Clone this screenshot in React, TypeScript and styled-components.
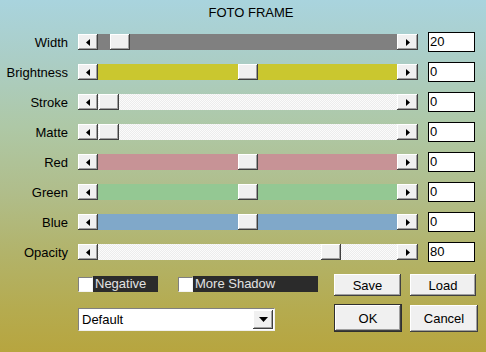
import React from "react";
import styled, { createGlobalStyle, css } from "styled-components";

const Global = createGlobalStyle`
  html, body { margin: 0; padding: 0; }
  body { font-family: "Liberation Sans", Arial, sans-serif; }
`;

const raised = css`
  background: #f0f0f0;
  box-shadow: inset -1px -1px #404040, inset 1px 1px #ffffff, inset -2px -2px #a0a0a0;
`;

const Dialog = styled.div`
  width: 486px;
  height: 352px;
  box-sizing: border-box;
  display: flex;
  flex-direction: column;
  background: linear-gradient(
    to bottom,
    #a9d4de 0%,
    #abcdc4 18%,
    #aec8a6 36%,
    #b0bd8a 55%,
    #b2b36a 72%,
    #b5ab4f 88%,
    #b7a53f 100%
  );
  font: 13px "Liberation Sans", Arial, sans-serif;
  color: #000;
`;

const Title = styled.div`
  margin-top: 5px;
  height: 15px;
  line-height: 15px;
  padding-left: 16px;
  text-align: center;
`;

const Rows = styled.div`
  margin-top: 12px;
  display: flex;
  flex-direction: column;
  gap: 10px;
`;

const Row = styled.div`
  display: grid;
  grid-template-columns: 68px 340px 47px;
  column-gap: 10px;
  align-items: center;
  height: 20px;
`;

const Label = styled.div`
  text-align: right;
  white-space: nowrap;
  line-height: 15px;
`;

const Slider = styled.div`
  display: flex;
  height: 16px;
`;

const ArrowBtn = styled.div<{ $w: number }>`
  ${raised};
  width: ${(p) => p.$w}px;
  flex: none;
  display: flex;
  align-items: center;
  justify-content: center;
`;

const Track = styled.div<{ $bg: string; $dither?: boolean }>`
  flex: 1;
  position: relative;
  background-color: ${(p) => p.$bg};
  ${(p) =>
    p.$dither &&
    css`
      background-image: conic-gradient(#ececec 25%, #fbfbfb 0 50%, #ececec 0 75%, #fbfbfb 0);
      background-size: 2px 2px;
    `}
`;

const Thumb = styled.div`
  ${raised};
  position: absolute;
  top: 0;
  width: 20px;
  height: 16px;
`;

const ValueBox = styled.div`
  width: 47px;
  height: 20px;
  box-sizing: border-box;
  border: 1px solid #000;
  background: #fff;
  padding-left: 1px;
  line-height: 18px;
`;

const Bottom = styled.div`
  margin-top: 12px;
  display: flex;
`;

const LeftCol = styled.div`
  width: 334px;
  box-sizing: border-box;
  padding-left: 78px;
  display: flex;
  flex-direction: column;
`;

const Checks = styled.div`
  margin-top: 2px;
  display: flex;
  gap: 20px;
  height: 16px;
`;

const CheckItem = styled.div`
  display: flex;
  align-items: center;
`;

const Box = styled.div`
  width: 15px;
  height: 15px;
  box-sizing: border-box;
  background: #fff;
  border-top: 1px solid #808080;
  border-left: 1px solid #808080;
  border-right: 1px solid #f4f4f4;
  border-bottom: 1px solid #f4f4f4;
`;

const CheckText = styled.div<{ $w: number }>`
  width: ${(p) => p.$w}px;
  height: 16px;
  box-sizing: border-box;
  padding-left: 2px;
  background: #2b2b2b;
  color: #e2e2e2;
  line-height: 16px;
  white-space: nowrap;
`;

const Dropdown = styled.div`
  margin-top: 16px;
  width: 197px;
  height: 23px;
  box-sizing: border-box;
  background: #fff;
  border-top: 1px solid #808080;
  border-left: 1px solid #808080;
  border-right: 1px solid #f0f0f0;
  border-bottom: 1px solid #f0f0f0;
  display: flex;
  align-items: center;
  padding: 0 1px 0 3px;
`;

const DropText = styled.div`
  flex: 1;
  line-height: 15px;
`;

const DropBtn = styled.div`
  ${raised};
  width: 20px;
  height: 19px;
  display: flex;
  align-items: center;
  justify-content: center;
`;

const RightCol = styled.div`
  display: grid;
  grid-template-columns: 68px 68px;
  grid-template-rows: 22px 28px;
  column-gap: 8px;
  row-gap: 8px;
`;

const Button = styled.div<{ $w: number; $h: number; $default?: boolean }>`
  ${raised};
  width: ${(p) => p.$w}px;
  height: ${(p) => p.$h}px;
  align-self: center;
  box-sizing: border-box;
  display: flex;
  align-items: center;
  justify-content: center;
  ${(p) =>
    p.$default &&
    css`
      border: 1px solid #303030;
    `}
`;

const LeftTri = () => (
  <svg width="4" height="7" viewBox="0 0 4 7">
    <polygon points="4,0 4,7 0,3.5" fill="#000" />
  </svg>
);
const RightTri = () => (
  <svg width="4" height="7" viewBox="0 0 4 7">
    <polygon points="0,0 0,7 4,3.5" fill="#000" />
  </svg>
);
const DownTri = () => (
  <svg width="9" height="5" viewBox="0 0 9 5">
    <polygon points="0,0 9,0 4.5,5" fill="#000" />
  </svg>
);

type SliderDef = {
  label: string;
  value: number;
  min: number;
  max: number;
  bg: string;
  dither?: boolean;
};

const sliders: SliderDef[] = [
  { label: "Width", value: 20, min: 0, max: 500, bg: "#808080" },
  { label: "Brightness", value: 0, min: -100, max: 100, bg: "#cac72f" },
  { label: "Stroke", value: 0, min: 0, max: 100, bg: "#f6f6f6", dither: true },
  { label: "Matte", value: 0, min: 0, max: 100, bg: "#f6f6f6", dither: true },
  { label: "Red", value: 0, min: -100, max: 100, bg: "#c79396" },
  { label: "Green", value: 0, min: -100, max: 100, bg: "#94c893" },
  { label: "Blue", value: 0, min: -100, max: 100, bg: "#80a8c9" },
  { label: "Opacity", value: 80, min: 0, max: 100, bg: "#f6f6f6", dither: true },
];

export default function App() {
  return (
    <>
      <Global />
      <Dialog>
        <Title>FOTO FRAME</Title>
        <Rows>
          {sliders.map((s) => {
            const frac = (s.value - s.min) / (s.max - s.min);
            const left = Math.round(1 + frac * 278);
            return (
              <Row key={s.label}>
                <Label>{s.label}</Label>
                <Slider>
                  <ArrowBtn $w={20}>
                    <LeftTri />
                  </ArrowBtn>
                  <Track $bg={s.bg} $dither={s.dither}>
                    <Thumb style={{ left }} />
                  </Track>
                  <ArrowBtn $w={21}>
                    <RightTri />
                  </ArrowBtn>
                </Slider>
                <ValueBox>{s.value}</ValueBox>
              </Row>
            );
          })}
        </Rows>
        <Bottom>
          <LeftCol>
            <Checks>
              <CheckItem>
                <Box />
                <CheckText $w={65}>Negative</CheckText>
              </CheckItem>
              <CheckItem>
                <Box />
                <CheckText $w={125}>More Shadow</CheckText>
              </CheckItem>
            </Checks>
            <Dropdown>
              <DropText>Default</DropText>
              <DropBtn>
                <DownTri />
              </DropBtn>
            </Dropdown>
          </LeftCol>
          <RightCol>
            <Button $w={67} $h={22}>Save</Button>
            <Button $w={66} $h={22}>Load</Button>
            <Button $w={68} $h={28} $default>OK</Button>
            <Button $w={68} $h={27}>Cancel</Button>
          </RightCol>
        </Bottom>
      </Dialog>
    </>
  );
}
